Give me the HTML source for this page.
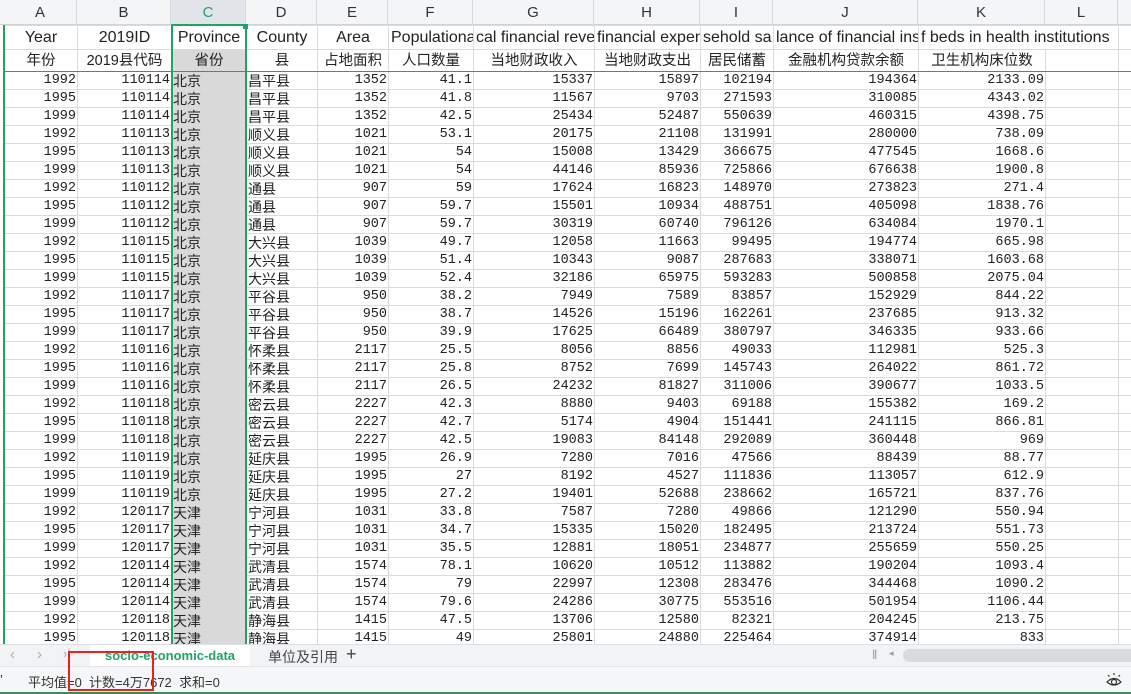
<!DOCTYPE html>
<html><head><meta charset="utf-8"><style>
*{margin:0;padding:0;box-sizing:border-box}
body{width:1131px;height:694px;overflow:hidden;background:#fff;position:relative;font-family:"Liberation Sans","Noto Sans CJK SC",sans-serif;color:#222}
#hdr{position:absolute;left:0;top:0;width:1131px;height:25px;background:#f4f5f7;border-bottom:1px solid #d0d3d9}
#hdr div{position:absolute;top:0;height:25px;line-height:25px;text-align:center;font-size:15px;color:#333;border-right:1px solid #d6d9de}
table{position:absolute;left:4px;top:25px;width:1154px;border-collapse:collapse;table-layout:fixed}
td{border:1px solid #d8dbe0;height:18px;font-family:"Liberation Mono","Noto Sans CJK SC",monospace;font-size:13.5px;text-align:right;padding:1px 1px 0 1px;white-space:nowrap;overflow:hidden;line-height:16px;vertical-align:middle}
td.z{text-align:left;font-family:"Liberation Sans","Noto Sans CJK SC",sans-serif;font-size:14px;line-height:16px;padding:0 1px}
td.c{background:#d9d9d9}
tr.r1 td{height:24px;font-family:"Liberation Sans","Noto Sans CJK SC",sans-serif;font-size:16px;text-align:center}
tr.r1 td.l{text-align:left;padding-left:2px}
tr.r2 td{height:22px;font-family:"Liberation Sans","Noto Sans CJK SC",sans-serif;font-size:14.5px;text-align:center;padding:0}
tr.r2 td{border-bottom:1px solid #2a9d6a}
</style></head><body>
<div id="hdr">
<div style="left:4px;width:73px">A</div>
<div style="left:77px;width:94px">B</div>
<div style="left:171px;width:75px;background:#e2e4e9;color:#21a366">C</div>
<div style="left:246px;width:71px">D</div>
<div style="left:317px;width:71px">E</div>
<div style="left:388px;width:85px">F</div>
<div style="left:473px;width:121px">G</div>
<div style="left:594px;width:106px">H</div>
<div style="left:700px;width:73px">I</div>
<div style="left:773px;width:145px">J</div>
<div style="left:918px;width:127px">K</div>
<div style="left:1045px;width:73px">L</div>
</div>
<table>
<colgroup><col style="width:73px"><col style="width:94px"><col style="width:75px"><col style="width:71px"><col style="width:71px"><col style="width:85px"><col style="width:121px"><col style="width:106px"><col style="width:73px"><col style="width:145px"><col style="width:127px"><col style="width:73px"><col style="width:40px"></colgroup>
<tr class="r1"><td>Year</td><td>2019ID</td><td>Province</td><td>County</td><td>Area</td><td class="l">Populational</td><td class="l">cal financial rever</td><td class="l">financial expen</td><td class="l">sehold sa</td><td class="l">lance of financial ins</td><td class="l" style="overflow:visible;border-right:none">f beds in health institutions</td><td style="border-left:none"></td><td></td></tr>
<tr class="r2"><td>年份</td><td>2019县代码</td><td class="c">省份</td><td>县</td><td>占地面积</td><td>人口数量</td><td>当地财政收入</td><td>当地财政支出</td><td>居民储蓄</td><td>金融机构贷款余额</td><td>卫生机构床位数</td><td></td><td></td></tr>
<tr><td>1992</td><td>110114</td><td class="z c">北京</td><td class="z">昌平县</td><td>1352</td><td>41.1</td><td>15337</td><td>15897</td><td>102194</td><td>194364</td><td>2133.09</td><td></td><td></td></tr>
<tr><td>1995</td><td>110114</td><td class="z c">北京</td><td class="z">昌平县</td><td>1352</td><td>41.8</td><td>11567</td><td>9703</td><td>271593</td><td>310085</td><td>4343.02</td><td></td><td></td></tr>
<tr><td>1999</td><td>110114</td><td class="z c">北京</td><td class="z">昌平县</td><td>1352</td><td>42.5</td><td>25434</td><td>52487</td><td>550639</td><td>460315</td><td>4398.75</td><td></td><td></td></tr>
<tr><td>1992</td><td>110113</td><td class="z c">北京</td><td class="z">顺义县</td><td>1021</td><td>53.1</td><td>20175</td><td>21108</td><td>131991</td><td>280000</td><td>738.09</td><td></td><td></td></tr>
<tr><td>1995</td><td>110113</td><td class="z c">北京</td><td class="z">顺义县</td><td>1021</td><td>54</td><td>15008</td><td>13429</td><td>366675</td><td>477545</td><td>1668.6</td><td></td><td></td></tr>
<tr><td>1999</td><td>110113</td><td class="z c">北京</td><td class="z">顺义县</td><td>1021</td><td>54</td><td>44146</td><td>85936</td><td>725866</td><td>676638</td><td>1900.8</td><td></td><td></td></tr>
<tr><td>1992</td><td>110112</td><td class="z c">北京</td><td class="z">通县</td><td>907</td><td>59</td><td>17624</td><td>16823</td><td>148970</td><td>273823</td><td>271.4</td><td></td><td></td></tr>
<tr><td>1995</td><td>110112</td><td class="z c">北京</td><td class="z">通县</td><td>907</td><td>59.7</td><td>15501</td><td>10934</td><td>488751</td><td>405098</td><td>1838.76</td><td></td><td></td></tr>
<tr><td>1999</td><td>110112</td><td class="z c">北京</td><td class="z">通县</td><td>907</td><td>59.7</td><td>30319</td><td>60740</td><td>796126</td><td>634084</td><td>1970.1</td><td></td><td></td></tr>
<tr><td>1992</td><td>110115</td><td class="z c">北京</td><td class="z">大兴县</td><td>1039</td><td>49.7</td><td>12058</td><td>11663</td><td>99495</td><td>194774</td><td>665.98</td><td></td><td></td></tr>
<tr><td>1995</td><td>110115</td><td class="z c">北京</td><td class="z">大兴县</td><td>1039</td><td>51.4</td><td>10343</td><td>9087</td><td>287683</td><td>338071</td><td>1603.68</td><td></td><td></td></tr>
<tr><td>1999</td><td>110115</td><td class="z c">北京</td><td class="z">大兴县</td><td>1039</td><td>52.4</td><td>32186</td><td>65975</td><td>593283</td><td>500858</td><td>2075.04</td><td></td><td></td></tr>
<tr><td>1992</td><td>110117</td><td class="z c">北京</td><td class="z">平谷县</td><td>950</td><td>38.2</td><td>7949</td><td>7589</td><td>83857</td><td>152929</td><td>844.22</td><td></td><td></td></tr>
<tr><td>1995</td><td>110117</td><td class="z c">北京</td><td class="z">平谷县</td><td>950</td><td>38.7</td><td>14526</td><td>15196</td><td>162261</td><td>237685</td><td>913.32</td><td></td><td></td></tr>
<tr><td>1999</td><td>110117</td><td class="z c">北京</td><td class="z">平谷县</td><td>950</td><td>39.9</td><td>17625</td><td>66489</td><td>380797</td><td>346335</td><td>933.66</td><td></td><td></td></tr>
<tr><td>1992</td><td>110116</td><td class="z c">北京</td><td class="z">怀柔县</td><td>2117</td><td>25.5</td><td>8056</td><td>8856</td><td>49033</td><td>112981</td><td>525.3</td><td></td><td></td></tr>
<tr><td>1995</td><td>110116</td><td class="z c">北京</td><td class="z">怀柔县</td><td>2117</td><td>25.8</td><td>8752</td><td>7699</td><td>145743</td><td>264022</td><td>861.72</td><td></td><td></td></tr>
<tr><td>1999</td><td>110116</td><td class="z c">北京</td><td class="z">怀柔县</td><td>2117</td><td>26.5</td><td>24232</td><td>81827</td><td>311006</td><td>390677</td><td>1033.5</td><td></td><td></td></tr>
<tr><td>1992</td><td>110118</td><td class="z c">北京</td><td class="z">密云县</td><td>2227</td><td>42.3</td><td>8880</td><td>9403</td><td>69188</td><td>155382</td><td>169.2</td><td></td><td></td></tr>
<tr><td>1995</td><td>110118</td><td class="z c">北京</td><td class="z">密云县</td><td>2227</td><td>42.7</td><td>5174</td><td>4904</td><td>151441</td><td>241115</td><td>866.81</td><td></td><td></td></tr>
<tr><td>1999</td><td>110118</td><td class="z c">北京</td><td class="z">密云县</td><td>2227</td><td>42.5</td><td>19083</td><td>84148</td><td>292089</td><td>360448</td><td>969</td><td></td><td></td></tr>
<tr><td>1992</td><td>110119</td><td class="z c">北京</td><td class="z">延庆县</td><td>1995</td><td>26.9</td><td>7280</td><td>7016</td><td>47566</td><td>88439</td><td>88.77</td><td></td><td></td></tr>
<tr><td>1995</td><td>110119</td><td class="z c">北京</td><td class="z">延庆县</td><td>1995</td><td>27</td><td>8192</td><td>4527</td><td>111836</td><td>113057</td><td>612.9</td><td></td><td></td></tr>
<tr><td>1999</td><td>110119</td><td class="z c">北京</td><td class="z">延庆县</td><td>1995</td><td>27.2</td><td>19401</td><td>52688</td><td>238662</td><td>165721</td><td>837.76</td><td></td><td></td></tr>
<tr><td>1992</td><td>120117</td><td class="z c">天津</td><td class="z">宁河县</td><td>1031</td><td>33.8</td><td>7587</td><td>7280</td><td>49866</td><td>121290</td><td>550.94</td><td></td><td></td></tr>
<tr><td>1995</td><td>120117</td><td class="z c">天津</td><td class="z">宁河县</td><td>1031</td><td>34.7</td><td>15335</td><td>15020</td><td>182495</td><td>213724</td><td>551.73</td><td></td><td></td></tr>
<tr><td>1999</td><td>120117</td><td class="z c">天津</td><td class="z">宁河县</td><td>1031</td><td>35.5</td><td>12881</td><td>18051</td><td>234877</td><td>255659</td><td>550.25</td><td></td><td></td></tr>
<tr><td>1992</td><td>120114</td><td class="z c">天津</td><td class="z">武清县</td><td>1574</td><td>78.1</td><td>10620</td><td>10512</td><td>113882</td><td>190204</td><td>1093.4</td><td></td><td></td></tr>
<tr><td>1995</td><td>120114</td><td class="z c">天津</td><td class="z">武清县</td><td>1574</td><td>79</td><td>22997</td><td>12308</td><td>283476</td><td>344468</td><td>1090.2</td><td></td><td></td></tr>
<tr><td>1999</td><td>120114</td><td class="z c">天津</td><td class="z">武清县</td><td>1574</td><td>79.6</td><td>24286</td><td>30775</td><td>553516</td><td>501954</td><td>1106.44</td><td></td><td></td></tr>
<tr><td>1992</td><td>120118</td><td class="z c">天津</td><td class="z">静海县</td><td>1415</td><td>47.5</td><td>13706</td><td>12580</td><td>82321</td><td>204245</td><td>213.75</td><td></td><td></td></tr>
<tr><td>1995</td><td>120118</td><td class="z c">天津</td><td class="z">静海县</td><td>1415</td><td>49</td><td>25801</td><td>24880</td><td>225464</td><td>374914</td><td>833</td><td></td><td></td></tr>
</table>
<div style="position:absolute;left:171px;top:24px;width:76px;height:622px;border:2px solid #21a366"></div>
<div style="position:absolute;left:243px;top:24px;width:5px;height:5px;background:#21a366"></div>
<div style="position:absolute;left:3px;top:25px;width:2px;height:620px;background:#21a366"></div>
<div style="position:absolute;left:0;top:644px;width:1131px;height:22px;background:#f2f3f5;border-top:1px solid #dcdfe3;font-size:13px">
<span style="position:absolute;left:10px;top:1px;color:#aaa;font-size:15px">&#x2039;</span>
<span style="position:absolute;left:37px;top:1px;color:#aaa;font-size:15px">&#x203A;</span>
<span style="position:absolute;left:63px;top:1px;color:#aaa;font-size:13px">&#x203A;|</span>
<div style="position:absolute;left:90px;top:0;width:160px;height:22px;background:#fff;color:#21a366;font-weight:bold;text-align:center;line-height:21px">socio-economic-data</div>
<span style="position:absolute;left:268px;top:2px;color:#444;font-size:14px">单位及引用</span>
<span style="position:absolute;left:346px;top:-1px;color:#444;font-size:18px">+</span>
<span style="position:absolute;left:872px;top:2px;color:#999">‖</span>
<span style="position:absolute;left:889px;top:3px;color:#999;font-size:9px">◂</span>
<div style="position:absolute;left:903px;top:4px;width:240px;height:13px;border-radius:7px;background:#d8dade"></div>
</div>
<div style="position:absolute;left:0;top:666px;width:1131px;height:26px;background:#f5f6f7;border-top:1px solid #e3e5e8;font-size:13px;color:#333">
<span style="position:absolute;left:0;top:5px">&#x2019;</span>
<span style="position:absolute;left:28px;top:5px">平均值=0&nbsp;&nbsp;计数=4万7672&nbsp;&nbsp;求和=0</span>
<svg style="position:absolute;left:1105px;top:5px" width="18" height="16" viewBox="0 0 18 16"><path d="M2 10 Q9 3 16 10 Q9 16 2 10Z" fill="none" stroke="#333" stroke-width="1.2"/><circle cx="9" cy="10" r="2.5" fill="none" stroke="#333" stroke-width="1.2"/><path d="M9 1v2M3 3l1.5 1.5M15 3l-1.5 1.5" stroke="#333" stroke-width="1.2"/></svg>
</div>
<div style="position:absolute;left:68px;top:651px;width:86px;height:40px;border:2px solid #e8231f"></div>
<div style="position:absolute;left:0;top:692px;width:1131px;height:2px;background:#3a8a5a"></div>
</body></html>
